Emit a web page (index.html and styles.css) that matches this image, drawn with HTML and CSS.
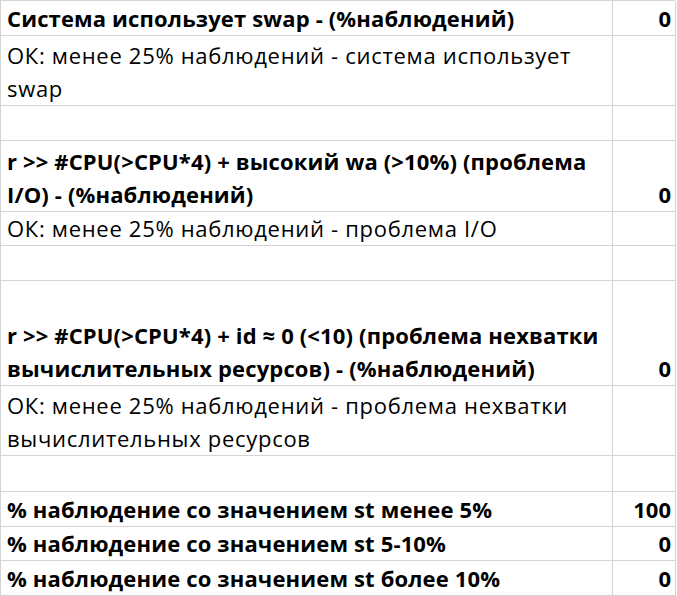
FILE: index.html
```html
<!DOCTYPE html>
<html lang="ru">
<head>
<meta charset="utf-8">
<link rel="stylesheet" href="styles.css">
</head>
<body>
<div class="sheet">
  <div class="cell b h35">Система использует swap - (%наблюдений)</div>
  <div class="cell num b h35">0</div>

  <div class="cell h70">ОК: менее 25% наблюдений - система использует<br>swap</div>
  <div class="cell num h70"></div>

  <div class="cell h35"></div>
  <div class="cell num h35"></div>

  <div class="cell b h71">r &gt;&gt; #CPU(&gt;CPU*4) + высокий wa (&gt;10%) (проблема<br>I/O) - (%наблюдений)</div>
  <div class="cell num b h71">0</div>

  <div class="cell h34">ОК: менее 25% наблюдений - проблема I/O</div>
  <div class="cell num h34"></div>

  <div class="cell h35"></div>
  <div class="cell num h35"></div>

  <div class="cell b h105">r &gt;&gt; #CPU(&gt;CPU*4) + id ≈ 0 (&lt;10) (проблема нехватки<br>вычислительных ресурсов) - (%наблюдений)</div>
  <div class="cell num b h105">0</div>

  <div class="cell h70">ОК: менее 25% наблюдений - проблема нехватки<br>вычислительных ресурсов</div>
  <div class="cell num h70"></div>

  <div class="cell h36"></div>
  <div class="cell num h36"></div>

  <div class="cell b h35">% наблюдение со значением st менее 5%</div>
  <div class="cell num b h35">100</div>

  <div class="cell b h34">% наблюдение со значением st 5-10%</div>
  <div class="cell num b h34">0</div>

  <div class="cell b h35">% наблюдение со значением st более 10%</div>
  <div class="cell num b h35">0</div>
</div>
</body>
</html>
```

FILE: styles.css
```css
html, body {
  margin: 0;
  padding: 0;
  background: #ffffff;
}

.sheet {
  display: grid;
  grid-template-columns: 612px 63px;
  border-top: 1px solid #d4d4d4;
  border-left: 1px solid #d4d4d4;
  width: 675px;
  box-sizing: border-box;
  font-family: "Open Sans", "Noto Sans", sans-serif;
  font-size: 22px;
  letter-spacing: 0.7px;
  color: #000000;
}

.cell {
  box-sizing: border-box;
  border-right: 1px solid #d4d4d4;
  border-bottom: 1px solid #d4d4d4;
  display: flex;
  flex-direction: column;
  justify-content: flex-end;
  line-height: 33px;
  padding: 0 4px 0 6px;
  white-space: nowrap;
  overflow: hidden;
}

.b {
  font-weight: 700;
  letter-spacing: 0.15px;
}

.num {
  text-align: right;
  letter-spacing: 0;
}

.h34 { height: 34px; }
.h35 { height: 35px; }
.h36 { height: 36px; }
.h70 { height: 70px; }
.h71 { height: 71px; }
.h105 { height: 105px; }
```
